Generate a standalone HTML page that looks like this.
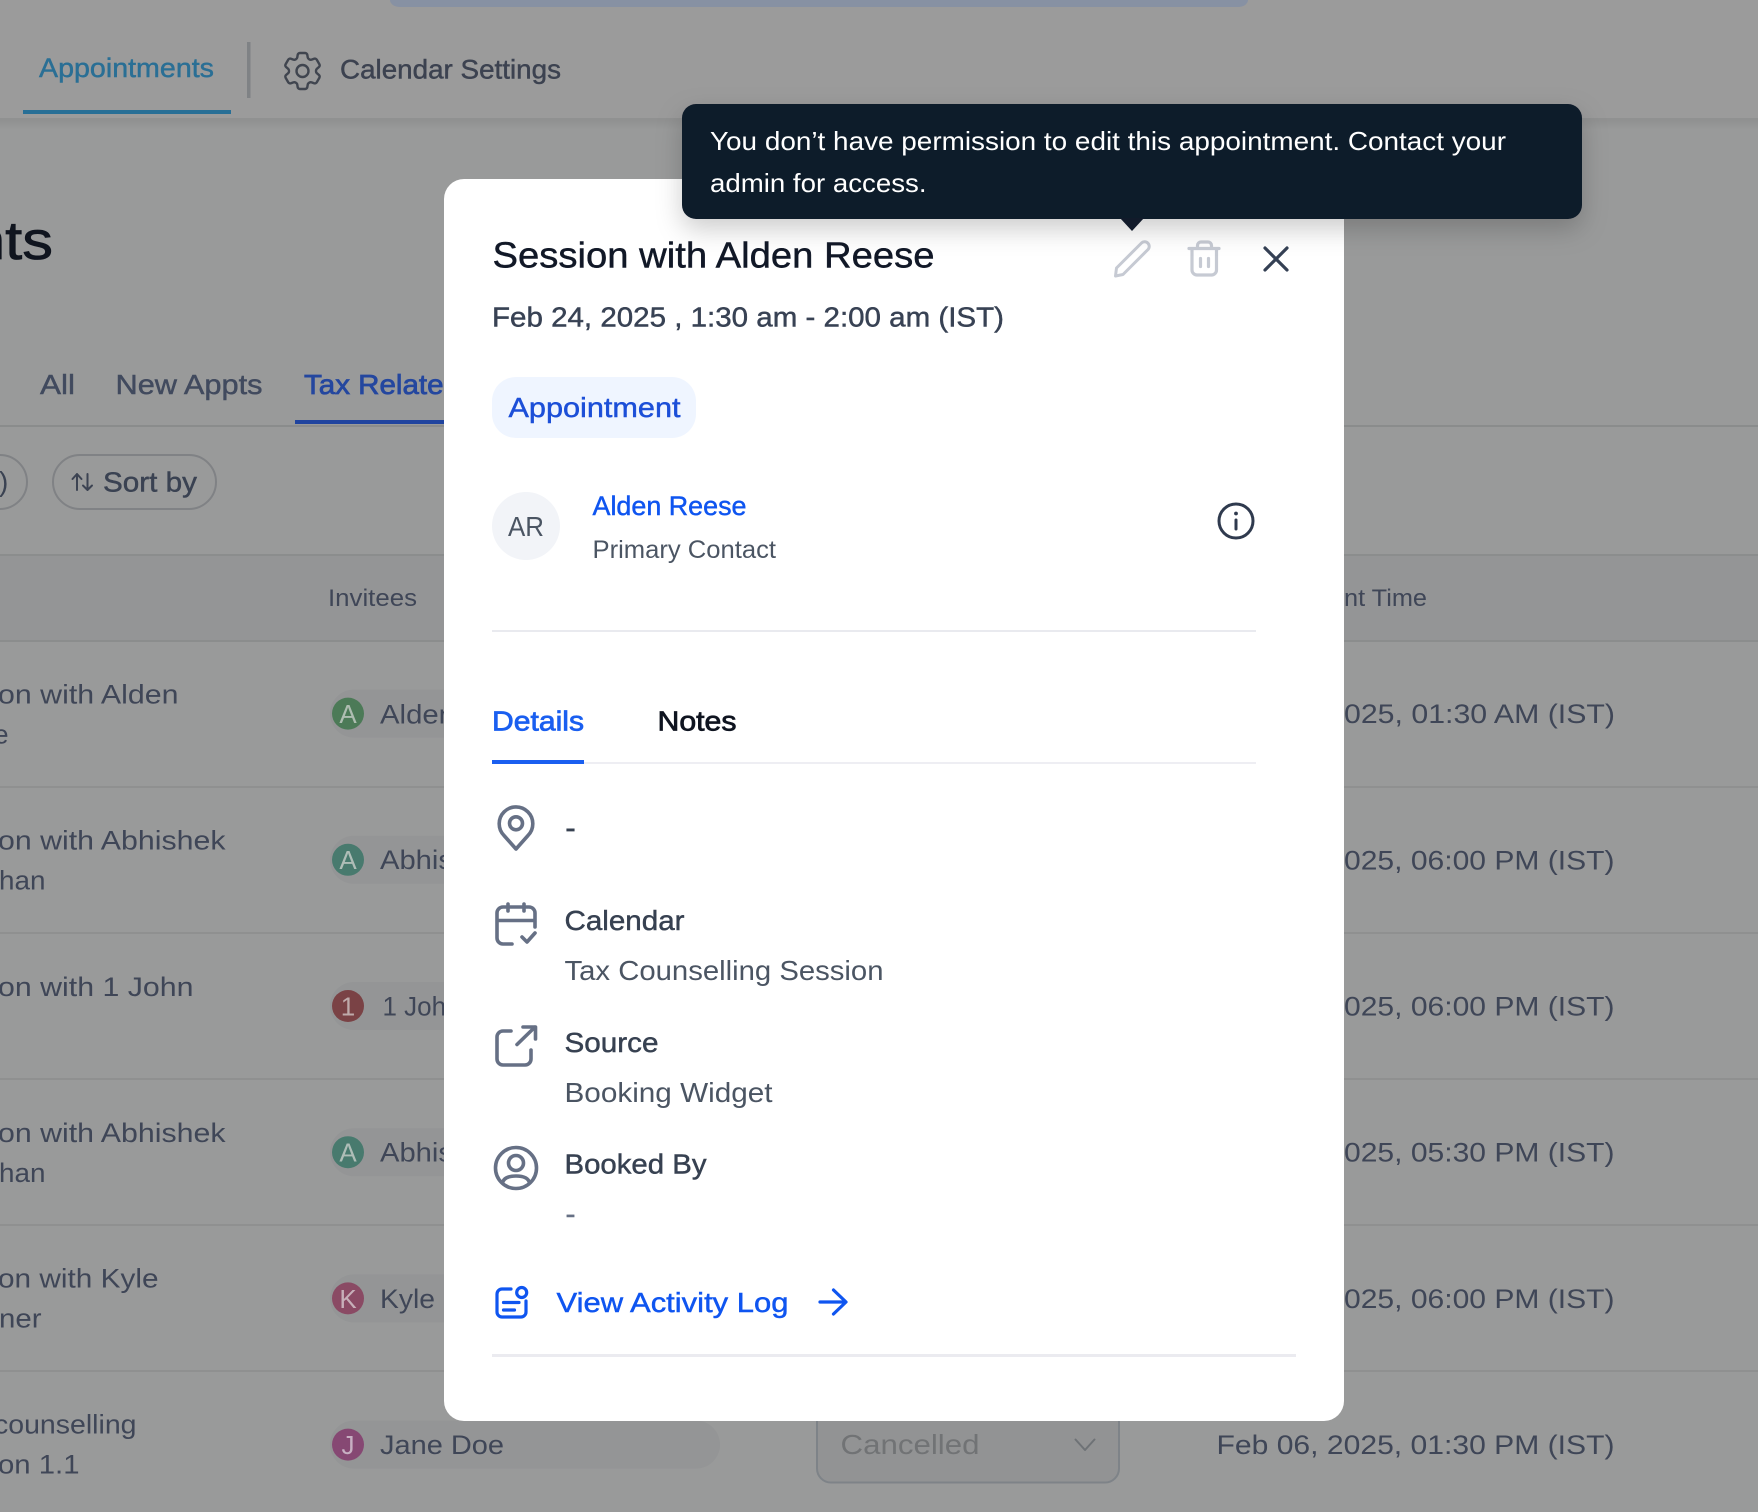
<!DOCTYPE html>
<html lang="en">
<head>
<meta charset="utf-8">
<title>Session with Alden Reese</title>
<style>
html,body{margin:0;padding:0;width:1758px;height:1512px;overflow:hidden;background:#999}
svg{display:block;position:absolute;left:0;top:0}
text{font-family:"Liberation Sans",sans-serif;fill:currentColor;white-space:pre}
.m{stroke:currentColor;stroke-width:.45px}
.s{stroke:currentColor;stroke-width:.75px}
.ic{fill:none;stroke-linecap:round;stroke-linejoin:round}
</style>
</head>
<body>
<svg width="1758" height="1512" viewBox="0 0 1758 1512" xmlns="http://www.w3.org/2000/svg">
<defs>
<linearGradient id="hs" x1="0" y1="0" x2="0" y2="1"><stop offset="0" stop-color="#000" stop-opacity=".06"/><stop offset="1" stop-color="#000" stop-opacity="0"/></linearGradient>
<filter id="tb" x="-10%" y="-40%" width="120%" height="200%"><feDropShadow dx="0" dy="10" stdDeviation="13" flood-color="#000" flood-opacity=".2"/></filter>
</defs>

<!-- page background -->
<rect width="1758" height="1512" fill="#999a9a"/>
<rect width="1758" height="118" fill="#9b9b9b"/>
<path d="M390 0H1248a10 7 0 0 1-10 7H400a10 7 0 0 1-10-7z" fill="#8791a3"/>
<rect y="118" width="1758" height="2" fill="#909191"/>
<rect y="120" width="1758" height="10" fill="url(#hs)"/>

<!-- top tabs -->
<text x="39" y="77" font-size="27" textLength="175" lengthAdjust="spacingAndGlyphs" color="#2a6f95" class="m">Appointments</text>
<rect x="23" y="110" width="208" height="4" fill="#286f96"/>
<rect x="247" y="42" width="3.500" height="56" fill="#7f8285"/>
<g transform="translate(278.500 47) scale(2)" class="ic" stroke="#40454f" stroke-width="1.200">
<path d="M9.594 3.940c.09-.542.56-.94 1.110-.94h2.593c.55 0 1.020.398 1.110.94l.213 1.281c.063.374.313.686.645.870.074.040.147.083.22.127.324.196.72.257 1.075.124l1.217-.456a1.125 1.125 0 011.370.49l1.296 2.247a1.125 1.125 0 01-.26 1.431l-1.003.827c-.293.24-.438.613-.431.992a6.759 6.759 0 010 .255c-.007.378.138.75.43.99l1.005.828c.424.35.534.954.26 1.430l-1.298 2.247a1.125 1.125 0 01-1.369.491l-1.217-.456c-.355-.133-.75-.072-1.076.124a6.570 6.570 0 01-.22.128c-.331.183-.581.495-.644.869l-.213 1.280c-.09.543-.56.941-1.110.941h-2.594c-.55 0-1.020-.398-1.110-.94l-.213-1.281c-.062-.374-.312-.686-.644-.87a6.520 6.520 0 01-.22-.127c-.325-.196-.72-.257-1.076-.124l-1.217.456a1.125 1.125 0 01-1.369-.49l-1.297-2.247a1.125 1.125 0 01.26-1.431l1.004-.827c.292-.24.437-.613.43-.992a6.932 6.932 0 010-.255c.007-.378-.138-.75-.43-.99l-1.004-.828a1.125 1.125 0 01-.26-1.430l1.297-2.247a1.125 1.125 0 011.370-.491l1.216.456c.356.133.751.072 1.076-.124.072-.044.146-.087.22-.128.332-.183.582-.495.644-.869l.214-1.281z"/>
<circle cx="12" cy="12" r="3"/>
</g>
<text x="340" y="78.500" font-size="27" textLength="221" lengthAdjust="spacingAndGlyphs" color="#3c4250" class="m">Calendar Settings</text>

<!-- page title -->
<text x="-29" y="259" font-size="54" textLength="82" lengthAdjust="spacingAndGlyphs" color="#10151f" class="s">nts</text>

<!-- category tabs -->
<text x="40" y="394" font-size="28" textLength="35" lengthAdjust="spacingAndGlyphs" color="#414a5e" class="m">All</text>
<text x="115.500" y="394" font-size="28" textLength="147" lengthAdjust="spacingAndGlyphs" color="#414a5e" class="m">New Appts</text>
<text x="304" y="394" font-size="28" textLength="156" lengthAdjust="spacingAndGlyphs" color="#24479f" class="s">Tax Related</text>
<rect y="425" width="1758" height="2" fill="#8a8c8c"/>
<rect x="295" y="420" width="160" height="4" fill="#20449f"/>

<!-- pills -->
<rect x="-60" y="455" width="87" height="54" rx="27" fill="none" stroke="#808285" stroke-width="2"/>
<text x="-1" y="491" font-size="28" color="#3a4252">)</text>
<rect x="53" y="455" width="163" height="54" rx="27" fill="none" stroke="#808285" stroke-width="2"/>
<g class="ic" stroke="#3c4352" stroke-width="2"><path d="M77 490V474M72.500 479 77 474l4.500 5M87.500 474V490M83 485.500l4.500 4.500 4.500-4.500"/></g>
<text x="103" y="491.500" font-size="28" textLength="94" lengthAdjust="spacingAndGlyphs" color="#3a4252" class="m">Sort by</text>

<!-- table header -->
<rect y="555" width="1758" height="86" fill="#949596"/>
<rect y="554" width="1758" height="2" fill="#8b8d8d"/>
<rect y="640" width="1758" height="2" fill="#8b8d8d"/>
<text x="328" y="606" font-size="24" textLength="89" lengthAdjust="spacingAndGlyphs" color="#3f4657">Invitees</text>
<text x="1344" y="606" font-size="24" textLength="83" lengthAdjust="spacingAndGlyphs" color="#3f4657">nt Time</text>

<!-- row lines -->
<g fill="#8f9090">
<rect y="786" width="1758" height="2"/><rect y="932" width="1758" height="2"/><rect y="1078" width="1758" height="2"/><rect y="1224" width="1758" height="2"/><rect y="1370" width="1758" height="2"/>
</g>

<!-- column 1 -->
<g font-size="27" color="#3f4657">
<text x="-2" y="703.500" textLength="180.500" lengthAdjust="spacingAndGlyphs">on with Alden</text>
<text x="-6" y="743.500" textLength="14.500" lengthAdjust="spacingAndGlyphs">e</text>
<text x="-2" y="849.700" textLength="227.500" lengthAdjust="spacingAndGlyphs">on with Abhishek</text>
<text x="-1" y="889.700" textLength="46.500" lengthAdjust="spacingAndGlyphs">han</text>
<text x="-2" y="995.900" textLength="195.500" lengthAdjust="spacingAndGlyphs">on with 1 John</text>
<text x="-2" y="1142.100" textLength="227.500" lengthAdjust="spacingAndGlyphs">on with Abhishek</text>
<text x="-1" y="1182.100" textLength="46.500" lengthAdjust="spacingAndGlyphs">han</text>
<text x="-2" y="1287.500" textLength="160.500" lengthAdjust="spacingAndGlyphs">on with Kyle</text>
<text x="-1" y="1327.500" textLength="42.500" lengthAdjust="spacingAndGlyphs">ner</text>
<text x="-6" y="1433.500" textLength="142.500" lengthAdjust="spacingAndGlyphs">counselling</text>
<text x="-2" y="1473.500" textLength="81.500" lengthAdjust="spacingAndGlyphs">on 1.1</text>
</g>

<!-- invitee chips -->
<g fill="#949596">
<rect x="330" y="689.600" width="390" height="48" rx="24"/>
<rect x="330" y="835.800" width="390" height="48" rx="24"/>
<rect x="330" y="982" width="390" height="48" rx="24"/>
<rect x="330" y="1128.200" width="390" height="48" rx="24"/>
<rect x="330" y="1274.400" width="390" height="48" rx="24"/>
<rect x="330" y="1420.600" width="390" height="48" rx="24"/>
</g>
<circle cx="348" cy="713.600" r="16" fill="#4c7a57"/>
<circle cx="348" cy="859.800" r="16" fill="#487a6e"/>
<circle cx="348" cy="1006" r="16" fill="#7a4245"/>
<circle cx="348" cy="1152.200" r="16" fill="#487a6e"/>
<circle cx="348" cy="1298.400" r="16" fill="#8a4a64"/>
<circle cx="348" cy="1444.600" r="16" fill="#864873"/>
<g font-size="26" text-anchor="middle">
<text x="348" y="723" color="#aebdb1">A</text>
<text x="348" y="869.200" color="#aebdb7">A</text>
<text x="348" y="1015.400" color="#bfaaaa">1</text>
<text x="348" y="1161.600" color="#aebdb7">A</text>
<text x="348" y="1307.800" color="#c7afb9">K</text>
<text x="348" y="1454" color="#c7afc2">J</text>
</g>
<g font-size="27" color="#3f4657">
<text x="380" y="723.500" textLength="75" lengthAdjust="spacingAndGlyphs">Alden</text>
<text x="380" y="869" textLength="120" lengthAdjust="spacingAndGlyphs">Abhishek</text>
<text x="382.500" y="1015.500" textLength="78" lengthAdjust="spacingAndGlyphs">1 John</text>
<text x="380" y="1161.500" textLength="120" lengthAdjust="spacingAndGlyphs">Abhishek</text>
<text x="380" y="1308" textLength="55" lengthAdjust="spacingAndGlyphs">Kyle</text>
<text x="380" y="1454" textLength="124" lengthAdjust="spacingAndGlyphs">Jane Doe</text>
</g>

<!-- status select -->
<rect x="817" y="1390" width="302" height="92.500" rx="14" fill="#929394" stroke="#7e8388" stroke-width="2"/>
<text x="840.500" y="1454" font-size="28" textLength="139" lengthAdjust="spacingAndGlyphs" color="#717375">Cancelled</text>
<path d="M1075.500 1439.500l9.500 10.500 9.500-10.500" class="ic" stroke="#6e7276" stroke-width="2"/>

<!-- time column -->
<g font-size="27" color="#3f4657">
<text x="1344" y="723" textLength="271" lengthAdjust="spacingAndGlyphs">025, 01:30 AM (IST)</text>
<text x="1344" y="869.500" textLength="270.500" lengthAdjust="spacingAndGlyphs">025, 06:00 PM (IST)</text>
<text x="1344" y="1015.500" textLength="270.500" lengthAdjust="spacingAndGlyphs">025, 06:00 PM (IST)</text>
<text x="1344" y="1161.500" textLength="270.500" lengthAdjust="spacingAndGlyphs">025, 05:30 PM (IST)</text>
<text x="1344" y="1308" textLength="270.500" lengthAdjust="spacingAndGlyphs">025, 06:00 PM (IST)</text>
<text x="1216.500" y="1454" textLength="398" lengthAdjust="spacingAndGlyphs">Feb 06, 2025, 01:30 PM (IST)</text>
</g>

<!-- modal -->
<rect x="444" y="179" width="900" height="1242" rx="20" fill="#fff"/>

<text x="492.500" y="267.500" font-size="36" textLength="442" lengthAdjust="spacingAndGlyphs" color="#111827" class="m">Session with Alden Reese</text>
<text x="492" y="326.500" font-size="28" textLength="512" lengthAdjust="spacingAndGlyphs" color="#384254" class="m">Feb 24, 2025 , 1:30 am - 2:00 am (IST)</text>

<!-- header icons -->
<path d="M1115.500 276l7.500-1.500 25-25a4.600 4.600 0 0 0-6.500-6.500l-25 25z" class="ic" stroke="#c6cad3" stroke-width="3"/>
<g class="ic" stroke="#c6cad3" stroke-width="3.200">
<path d="M1189 248.500h30M1197.500 248.500v-3a3.500 3.500 0 0 1 3.500-3.500h7a3.500 3.500 0 0 1 3.500 3.500v3M1192 248.500v21.500a5 5 0 0 0 5 5h14.500a5 5 0 0 0 5-5v-21.500M1200.500 258.500v8M1208.500 258.500v8"/>
</g>
<path d="M1265 248l22 22M1287 248l-22 22" class="ic" stroke="#344054" stroke-width="3.200"/>

<!-- type chip -->
<rect x="492" y="377" width="204" height="61" rx="24" fill="#eff5ff"/>
<text x="508.500" y="417" font-size="28" textLength="172" lengthAdjust="spacingAndGlyphs" color="#1c4fd8" class="m">Appointment</text>

<!-- contact -->
<circle cx="526" cy="526" r="34" fill="#f2f4f8"/>
<text x="508" y="536" font-size="28" textLength="36" lengthAdjust="spacingAndGlyphs" color="#4b5563">AR</text>
<text x="592.500" y="515" font-size="27" textLength="154" lengthAdjust="spacingAndGlyphs" color="#0f55f0" class="m">Alden Reese</text>
<text x="592.500" y="558" font-size="25" textLength="183.500" lengthAdjust="spacingAndGlyphs" color="#4b5563">Primary Contact</text>
<circle cx="1236" cy="521" r="17" fill="none" stroke="#2f3a4e" stroke-width="3"/>
<path d="M1236 520v9" class="ic" stroke="#2f3a4e" stroke-width="3"/>
<circle cx="1236" cy="513.500" r="1.900" fill="#2f3a4e"/>
<rect x="492" y="630" width="764" height="2" fill="#e9eaef"/>

<!-- detail tabs -->
<text x="492" y="730.500" font-size="27.500" textLength="92" lengthAdjust="spacingAndGlyphs" color="#1a5ff0" class="s">Details</text>
<text x="657.500" y="730.500" font-size="27.500" textLength="79" lengthAdjust="spacingAndGlyphs" color="#0f1420" class="s">Notes</text>
<rect x="492" y="762" width="764" height="2" fill="#eeeef3"/>
<rect x="492" y="760" width="92" height="4" fill="#1a5ff0"/>

<!-- location -->
<g class="ic" stroke="#667085" stroke-width="3.600">
<path d="M516 849l-12-13.500a16.800 16.800 0 1 1 24 0z"/>
<circle cx="516" cy="823.300" r="6.500"/>
</g>
<text x="565.500" y="837.500" font-size="28" textLength="10" lengthAdjust="spacingAndGlyphs" color="#374151" class="s">-</text>

<!-- calendar -->
<g class="ic" stroke="#667085" stroke-width="3.600">
<path d="M535 927v-14a6 6 0 0 0-6-6h-26a6 6 0 0 0-6 6v25a6 6 0 0 0 6 6h9M508 904v7M524 904v7M497 920.500h38M522 937l5 5 8-9"/>
</g>
<text x="564.500" y="930" font-size="28" textLength="120" lengthAdjust="spacingAndGlyphs" color="#374151" class="m">Calendar</text>
<text x="564.500" y="980" font-size="28" textLength="319" lengthAdjust="spacingAndGlyphs" color="#4b5563">Tax Counselling Session</text>

<!-- source -->
<g class="ic" stroke="#667085" stroke-width="3.600">
<path d="M511 1031h-8a6 6 0 0 0-6 6v22a6 6 0 0 0 6 6h22a6 6 0 0 0 6-6v-9M517 1044.500l18-17.500M523 1027h12.500v12"/>
</g>
<text x="564.500" y="1052" font-size="28" textLength="94" lengthAdjust="spacingAndGlyphs" color="#374151" class="m">Source</text>
<text x="564.500" y="1102" font-size="28" textLength="208" lengthAdjust="spacingAndGlyphs" color="#4b5563">Booking Widget</text>

<!-- booked by -->
<g class="ic" stroke="#667085" stroke-width="3.600">
<circle cx="516" cy="1168" r="20.500"/>
<circle cx="516" cy="1163" r="7.500"/>
<path d="M502.500 1183c1-5 6-7 13.500-7s12.500 2 13.500 7"/>
</g>
<text x="564.500" y="1173.500" font-size="28" textLength="142" lengthAdjust="spacingAndGlyphs" color="#374151" class="m">Booked By</text>
<text x="565.500" y="1223.500" font-size="28" textLength="10" lengthAdjust="spacingAndGlyphs" color="#667085" class="m">-</text>

<!-- activity log -->
<g class="ic" stroke="#0f55f0" stroke-width="3.200">
<path d="M511 1289h-9a5 5 0 0 0-5 5v18a5 5 0 0 0 5 5h19a5 5 0 0 0 5-5v-11M503.500 1302.500h15.500M503.500 1310h11"/>
<circle cx="521.700" cy="1292.500" r="5"/>
</g>
<text x="556.500" y="1312" font-size="28" textLength="232" lengthAdjust="spacingAndGlyphs" color="#0f55f0" class="m">View Activity Log</text>
<path d="M820 1302h25.500M833.500 1290l12.500 12-12.500 12" class="ic" stroke="#0f55f0" stroke-width="3.200"/>
<rect x="492" y="1354" width="804" height="3" fill="#ebebf0"/>

<!-- tooltip -->
<rect x="682" y="104" width="900" height="115" rx="14" fill="#111a2a" filter="url(#tb)"/>
<path d="M1120 218h24l-12 13z" fill="#111a2a"/>
<text x="710" y="150" font-size="26" textLength="796" lengthAdjust="spacingAndGlyphs" color="#ffffff">You don’t have permission to edit this appointment. Contact your</text>
<text x="710" y="192" font-size="26" textLength="216.500" lengthAdjust="spacingAndGlyphs" color="#ffffff">admin for access.</text>
</svg>
</body>
</html>
